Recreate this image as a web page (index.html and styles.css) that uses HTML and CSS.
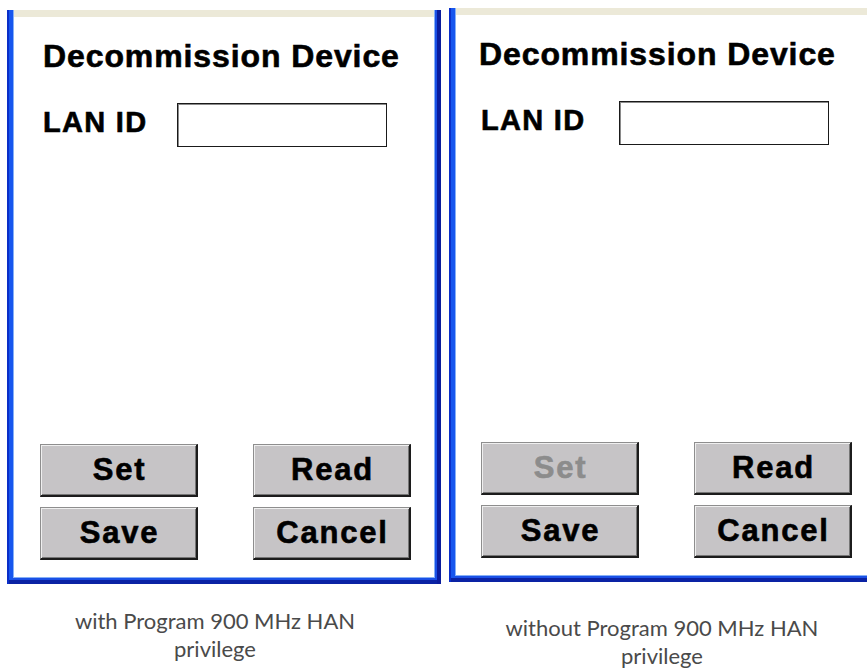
FILE: index.html
```html
<!DOCTYPE html>
<html lang="en">
<head>
<meta charset="utf-8">
<title>Decommission Device</title>
<link rel="stylesheet" href="styles.css">
</head>
<body>
<div class="page">
  <div class="col col--a">
    <div class="frame">
      <div class="titlebar"></div>
      <div class="screen">
        <h1 class="title">Decommission Device</h1>
        <div class="lan">
          <span class="lan-label">LAN ID</span>
          <span class="lan-input"></span>
        </div>
        <div class="buttons">
          <span class="btn">Set</span>
          <span class="btn">Read</span>
          <span class="btn">Save</span>
          <span class="btn">Cancel</span>
        </div>
      </div>
    </div>
    <p class="caption caption--a">with Program 900 MHz HAN<br>privilege</p>
  </div>
  <div class="col col--b">
    <div class="frame">
      <div class="titlebar"></div>
      <div class="screen">
        <h1 class="title">Decommission Device</h1>
        <div class="lan">
          <span class="lan-label">LAN ID</span>
          <span class="lan-input"></span>
        </div>
        <div class="buttons">
          <span class="btn btn--disabled">Set</span>
          <span class="btn">Read</span>
          <span class="btn">Save</span>
          <span class="btn">Cancel</span>
        </div>
      </div>
    </div>
    <p class="caption caption--b">without Program 900 MHz HAN<br>privilege</p>
  </div>
</div>
</body>
</html>
```
FILE: styles.css
```css
html, body {
  margin: 0;
  padding: 0;
  background: #ffffff;
  overflow: hidden;
}

.page {
  display: flex;
  align-items: flex-start;
  gap: 8px;
  padding-left: 7px;
  width: 1000px;
}

.col {
  width: 434px;
  flex: none;
  display: flex;
  flex-direction: column;
}

.col--a { padding-top: 10px; }
.col--b { padding-top: 8px; }

.frame {
  height: 574px;
  box-sizing: border-box;
  padding: 0 7px 7px 7px;
  display: flex;
  flex-direction: column;
  background: #ffffff;
  box-shadow:
    inset 2px 0 0 #0a2ec8,
    inset -4px 0 0 #0a1c9c,
    inset 0 -4px 0 #0a22a4,
    inset 6px 0 0 #1756ee,
    inset -6px 0 0 #1a50e6,
    inset 0 -6px 0 #1a50e6,
    inset 7px 0 0 #86b0f6,
    inset -7px 0 0 #86b0f6,
    inset 0 -7px 0 #86b0f6;
}

.titlebar {
  height: 7px;
  background: #ece9d8;
  flex: none;
}

.screen {
  flex: 1;
  display: flex;
  flex-direction: column;
  background: #ffffff;
  font-family: "Liberation Sans", Arial, sans-serif;
  font-weight: bold;
  color: #000000;
  -webkit-text-stroke: 0.6px #000000;
}

.title {
  margin: 21px 0 0 0;
  padding-left: 29px;
  font-size: 32px;
  line-height: 36px;
  letter-spacing: 0.9px;
  font-weight: bold;
}

.lan {
  display: flex;
  align-items: flex-start;
  margin-top: 29px;
  padding-left: 29px;
}

.lan-label {
  width: 134px;
  flex: none;
  font-size: 29px;
  line-height: 38px;
  letter-spacing: 1.3px;
}

.lan-input {
  width: 210px;
  height: 44px;
  box-sizing: border-box;
  border: 1px solid #1a1a1a;
  box-shadow: inset 1px 1px 0 #8a8a8a;
  background: #ffffff;
}

.buttons {
  margin-top: auto;
  margin-bottom: 17px;
  padding-left: 26px;
  display: grid;
  grid-template-columns: 158px 158px;
  grid-auto-rows: 53px;
  column-gap: 55px;
  row-gap: 10px;
}

.btn {
  display: flex;
  align-items: center;
  justify-content: center;
  box-sizing: border-box;
  padding-left: 2px;
  background: #c6c4c6;
  border-top: 1px solid #8e8e8e;
  border-left: 1px solid #8e8e8e;
  border-right: 2px solid #1c1c1c;
  border-bottom: 2px solid #1c1c1c;
  box-shadow: inset 1px 1px 0 #efefef, inset -1px -1px 0 #767676;
  font-size: 31px;
  letter-spacing: 1.8px;
  color: #000000;
}

.btn--disabled {
  color: #8c8c8c;
  -webkit-text-stroke: 0.6px #8c8c8c;
}

.col--b .title { padding-left: 23px; }
.col--b .lan { padding-left: 25px; }
.col--b .lan-label { width: 138px; }
.col--b .buttons { padding-left: 25px; }

.caption {
  margin: 0;
  font-family: Lato, "Noto Sans", sans-serif;
  font-size: 22px;
  line-height: 28px;
  color: #4a4a4a;
  text-align: center;
}

.caption--a {
  margin-top: 23px;
  padding-right: 18px;
}

.caption--b {
  margin-top: 32px;
  padding-right: 8px;
}
```
